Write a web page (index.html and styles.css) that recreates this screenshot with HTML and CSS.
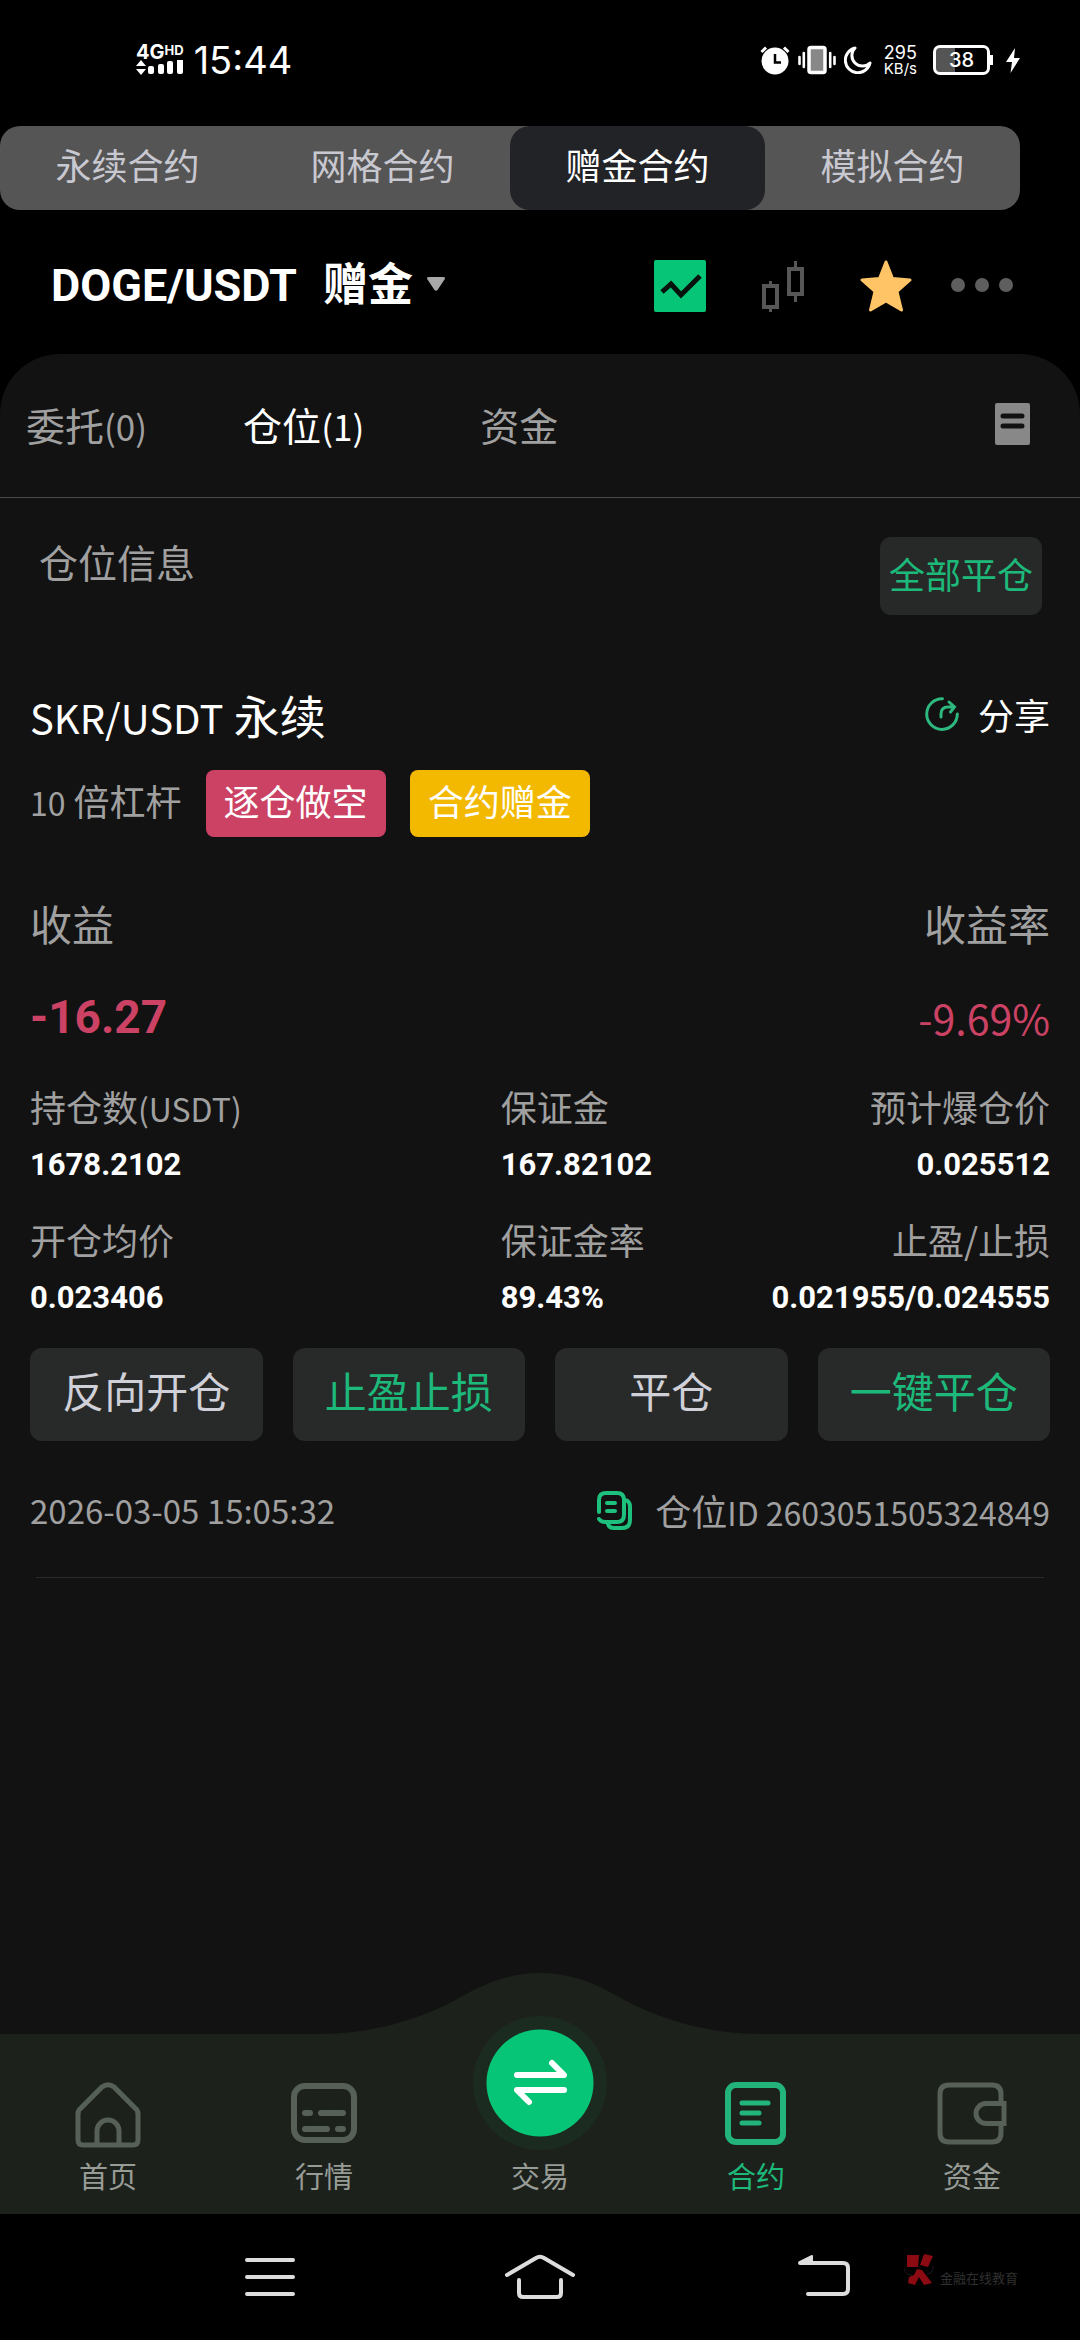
FILE: index.html
```html
<!DOCTYPE html>
<html lang="zh-CN">
<head>
<meta charset="utf-8">
<meta name="viewport" content="width=device-width, initial-scale=1">
<title>合约仓位</title>
<link rel="stylesheet" href="styles.css">
</head>
<body>
<header class="status">
  <div class="status-left">
    <div class="signal">
      <div class="signal-type">4G<span class="signal-hd">HD</span></div>
      <svg width="47" height="16" viewBox="0 0 47 16" fill="#fff"><path d="M5 0l5 6H0zM0 9h10l-5 6z"/><rect x="12" y="6" width="6" height="8" rx="2"/><rect x="22" y="4" width="6" height="10" rx="2"/><rect x="31" y="1" width="6" height="13" rx="2"/><rect x="41" y="-2" width="6" height="16" rx="2"/></svg>
    </div>
    <time class="clock">15:44</time>
  </div>
  <div class="status-right">
    <svg width="30" height="30" viewBox="0 0 30 30"><circle cx="15" cy="16" r="13.500" fill="#fff"/><path d="M1.500 7L6 2.500M28.500 7L24 2.500" stroke="#fff" stroke-width="3"/><path d="M15 9v8.500h6" fill="none" stroke="#000" stroke-width="2.500"/></svg>
    <svg width="38" height="30" viewBox="0 0 38 30"><rect x="11" y="2.500" width="16" height="25" rx="2" fill="#888" stroke="#fff" stroke-width="3.500"/><path d="M1.500 12v7M5.800 8v14M32.200 8v14M36.500 12v7" stroke="#fff" stroke-width="2.600" stroke-linecap="round"/></svg>
    <svg width="28" height="28" viewBox="0 0 28 28"><path d="M11 2A12.500 12.500 0 1 0 26 17A10.500 10.500 0 0 1 11 2z" fill="none" stroke="#fff" stroke-width="3" stroke-linejoin="round"/></svg>
    <div class="speed"><span class="speed-num">295</span><span class="speed-unit">KB/s</span></div>
    <div class="battery"><span>38</span></div>
    <svg width="14" height="25" viewBox="0 0 14 25"><path d="M9 0L0 14h6L4.500 25L14 10H8z" fill="#fff"/></svg>
  </div>
</header>

<nav class="modes">
  <button class="mode" type="button">永续合约</button>
  <button class="mode" type="button">网格合约</button>
  <button class="mode mode-on" type="button">赠金合约</button>
  <button class="mode" type="button">模拟合约</button>
</nav>

<section class="pair">
  <button class="pair-name" type="button"><span><span class="pair-code">DOGE/USDT</span>赠金</span>
    <svg width="18" height="14" viewBox="0 0 18 14"><path d="M2 0h14q3 0 1.500 2.500L10.500 13q-1.500 1.500-3 0L.5 2.500Q-1 0 2 0z" fill="#a8a8a8"/></svg>
  </button>
  <div class="pair-tools">
    <button class="icon-btn" type="button" aria-label="走势图"><svg width="52" height="52" viewBox="0 0 52 52"><rect width="52" height="52" rx="2" fill="#06c577"/><path d="M8 32l9-8 10 11 19-19" fill="none" stroke="#06120c" stroke-width="5"/></svg></button>
    <button class="icon-btn" type="button" aria-label="K线"><svg width="42" height="52" viewBox="0 0 42 52" fill="none" stroke="#575757" stroke-width="4"><rect x="2" y="26" width="13" height="21"/><rect x="27" y="9" width="13" height="25"/><path d="M8.500 21v5M8.500 47v5M33.500 1v8M33.500 34v8" stroke-width="3"/></svg></button>
    <button class="icon-btn" type="button" aria-label="收藏"><svg width="52" height="52" viewBox="0 0 52 52"><path d="M26 2L32.500 18.500 50 20 37 31.500 41.500 50 26 41 10.500 50 15 31.500 2 20 19.500 18.500z" fill="#ffc466" stroke="#ffc466" stroke-width="3" stroke-linejoin="round"/></svg></button>
    <button class="icon-btn" type="button" aria-label="更多"><svg width="62" height="52" viewBox="0 0 62 52" fill="#5e5e5e"><circle cx="7" cy="25" r="7"/><circle cx="31" cy="25" r="7"/><circle cx="55" cy="25" r="7"/></svg></button>
  </div>
</section>

<main class="sheet">
  <div class="sheet-head">
    <button class="tab" type="button">委托<span class="lat-39">(0)</span></button>
    <button class="tab tab-on" type="button">仓位<span class="lat-39">(1)</span></button>
    <button class="tab" type="button">资金</button>
    <button class="icon-btn records" type="button" aria-label="记录"><svg width="35" height="42" viewBox="0 0 35 42"><rect width="35" height="42" rx="2" fill="#888"/><path d="M8 13h19M8 23h19" stroke="#121212" stroke-width="5" stroke-linecap="round"/></svg></button>
  </div>

  <div class="section-head">
    <h2 class="section-title">仓位信息</h2>
    <button class="close-all" type="button">全部平仓</button>
  </div>

  <article class="position">
    <div class="row">
      <h3 class="symbol"><span class="lat-45">SKR/USDT</span> 永续</h3>
      <button class="share" type="button"><svg width="34" height="34" viewBox="0 0 34 34" fill="none" stroke="#2db87f" stroke-width="3" stroke-linecap="round"><path d="M17.500 1.800A15.300 15.300 0 1 0 32.300 17"/><path d="M16 20v-3q0-7 7-7h5M24 5l5.500 5-4 5"/></svg>分享</button>
    </div>
    <div class="tags">
      <span class="lever"><span class="lat-36">10</span> 倍杠杆</span>
      <span class="tag tag-short">逐仓做空</span>
      <span class="tag tag-bonus">合约赠金</span>
    </div>
    <div class="row profit-labels"><span>收益</span><span>收益率</span></div>
    <div class="row profit-values"><strong class="profit">-16.27</strong><span class="rate">-9.69%</span></div>
    <dl class="stats">
      <div class="stat"><dt>持仓数<span class="lat-36">(USDT)</span></dt><dd>1678.2102</dd></div>
      <div class="stat"><dt>保证金</dt><dd>167.82102</dd></div>
      <div class="stat stat-end"><dt>预计爆仓价</dt><dd>0.025512</dd></div>
      <div class="stat"><dt>开仓均价</dt><dd>0.023406</dd></div>
      <div class="stat"><dt>保证金率</dt><dd>89.43%</dd></div>
      <div class="stat stat-end"><dt>止盈/止损</dt><dd>0.021955/0.024555</dd></div>
    </dl>
    <div class="actions">
      <button class="action" type="button">反向开仓</button>
      <button class="action action-green" type="button">止盈止损</button>
      <button class="action" type="button">平仓</button>
      <button class="action action-green" type="button">一键平仓</button>
    </div>
    <div class="row meta">
      <time class="opened">2026-03-05 15:05:32</time>
      <div class="pos-id">
        <button class="icon-btn" type="button" aria-label="复制"><svg width="35" height="39" viewBox="0 0 35 39" fill="none" stroke="#1dc07c" stroke-width="4" stroke-linecap="round"><path d="M2 21V9q0-7 7-7h11q7 0 7 7v15q0 7-7 7H8q-4 0-6-3"/><path d="M10 12h8M10 20h8"/><path d="M28 9q5 1 5 7v13q0 8-8 8h-8q-5 0-6-4"/></svg></button>
        <span>仓位<span class="lat-36">ID 2603051505324849</span></span>
      </div>
    </div>
    <hr class="rule">
  </article>
</main>

<nav class="tabbar">
  <svg class="hump" width="440" height="62" viewBox="0 0 440 62"><path d="M0 61C50 61 100 47 141 24C165 10 190 0 220 0S275 10 299 24C340 47 390 61 440 61V62H0z" fill="#1d211c"/></svg>
  <a class="nav-item" href="#home"><svg width="66" height="66" viewBox="0 0 66 66" fill="none" stroke="#566057" stroke-width="5"><path d="M3 32Q3 28 6 26L27 5Q33 .5 39 5L60 26Q63 28 63 32V58Q63 63 58 63H8Q3 63 3 58z"/><path d="M22 63V49a11 11 0 0 1 22 0V63"/></svg>首页</a>
  <a class="nav-item" href="#market"><svg width="66" height="66" viewBox="0 0 66 66" fill="none" stroke="#566057" stroke-width="6"><rect x="3" y="4" width="60" height="54" rx="11"/><path d="M14 31h5M30 31h22M14 47h22M47 47h5" stroke-linecap="round"/></svg>行情</a>
  <a class="nav-item nav-trade" href="#trade"><svg width="134" height="134" viewBox="0 0 134 134"><circle cx="67" cy="67" r="67" fill="#1c2b1f"/><circle cx="67" cy="67" r="53.500" fill="#06c577"/><path d="M44 59h47L79 47M91 74H44l12 12" fill="none" stroke="#fff" stroke-width="6" stroke-linecap="round" stroke-linejoin="round"/></svg>交易</a>
  <a class="nav-item nav-on" href="#contract"><svg width="66" height="66" viewBox="0 0 66 66" fill="none" stroke="#22b47a" stroke-width="6"><rect x="5" y="3" width="55" height="57" rx="8"/><path d="M19 21h26M19 31h17M19 41h17" stroke-width="5" stroke-linecap="round"/></svg>合约</a>
  <a class="nav-item" href="#assets"><svg width="70" height="66" viewBox="0 0 70 66" fill="none" stroke="#566057" stroke-width="5"><path d="M64 21V12Q64 3 55 3H12Q3 3 3 12V51Q3 60 12 60H55Q64 60 64 51V42"/><path d="M67 21.500H49a10 10 0 0 0 0 20H67z"/></svg>资金</a>
</nav>

<footer class="sysbar">
  <button class="icon-btn" type="button" aria-label="最近任务"><svg width="50" height="46" viewBox="0 0 50 46" stroke="#ddd" stroke-width="4" stroke-linecap="round"><path d="M2 6h46M2 23h46M2 40h46"/></svg></button>
  <button class="icon-btn" type="button" aria-label="主屏幕"><svg width="70" height="46" viewBox="0 0 70 46" fill="none" stroke="#ddd" stroke-width="4" stroke-linecap="round"><path d="M2 21L31 4q4-2.500 8 0L68 21M14 26v13q0 4 4 4h34q4 0 4-4V26"/></svg></button>
  <button class="icon-btn sys-back" type="button" aria-label="返回"><svg width="52" height="46" viewBox="0 0 52 46" fill="none" stroke="#ddd" stroke-width="4" stroke-linecap="round"><path d="M2 9h43q5 0 5 5v21q0 5-5 5H10"/><path d="M2 8L14 2v7z" fill="#ddd" stroke-width="2" stroke-linejoin="round"/></svg></button>
  <div class="watermark"><svg width="32" height="32" viewBox="0 0 32 32"><path d="M4 1h12l-1 12H4zM21 0l9 2-5 11-8-2zM14 15l5 1 10 13-8 2-5-8-4 8-7-2 1-6 5-2z" fill="#8c0a12"/><path d="M1 15q2 6 8 6M30 12q1 7-6 8" fill="none" stroke="#1c1c22"/></svg><span>金融在线教育</span></div>
</footer>
</body>
</html>
```
FILE: styles.css
```css
* { box-sizing: border-box; }
body {
  margin: 0;
  min-height: 100vh;
  display: flex;
  flex-direction: column;
  background: #000;
  color: #fff;
  font-family: "Noto Sans CJK SC", sans-serif;
  font-size: 36px;
  line-height: 48px;
}
button {
  margin: 0;
  padding: 0;
  border: 0;
  background: none;
  color: inherit;
  font: inherit;
}
svg { display: block; flex: none; }
h2, h3, dl, dd { margin: 0; font-weight: 400; }

/* Latin runs sit slightly smaller than the Chinese text beside them */
.lat-36, .lat-39, .lat-45 { line-height: 1px; }
.lat-36 { font-size: 32px; }
.lat-39 { font-size: 35px; }
.lat-45 { font-size: 40px; }

.status {
  height: 120px;
  padding: 0 60px 0 136px;
  display: flex;
  align-items: center;
  justify-content: space-between;
  font-family: Inter, sans-serif;
}
.status-left, .status-right { display: flex; align-items: center; }
.status-left { gap: 10px; }
.status-right { gap: 8px; }
.signal-type {
  display: flex;
  font: 700 20px/16px Inter, sans-serif;
}
.signal-hd { font-size: 13px; line-height: 12px; }
.clock { font-size: 38px; }
.speed {
  display: flex;
  flex-direction: column;
  align-items: center;
  margin: 0 8px 0 4px;
}
.speed-num { font-size: 18px; line-height: 17px; }
.speed-unit { font-size: 15px; line-height: 15px; }
.battery {
  position: relative;
  width: 57px;
  height: 30px;
  margin-right: 8px;
  border: 3px solid #fff;
  border-radius: 7px;
  background: linear-gradient(90deg, #555 38%, #000 38%);
  font-size: 20px;
  line-height: 24px;
  font-weight: 500;
  text-align: center;
}
.battery::after {
  content: "";
  position: absolute;
  right: -6px;
  top: 7px;
  width: 3px;
  height: 10px;
  background: #fff;
}

.modes {
  display: flex;
  height: 84px;
  margin: 6px 60px 0 0;
  border-radius: 20px;
  background: #555;
}
.mode {
  flex: 1;
  padding-bottom: 8px;
  border-radius: 20px;
  color: #c8c8d0;
}
.mode-on { background: #222327; color: #fff; }

.pair {
  display: flex;
  justify-content: space-between;
  align-items: center;
  height: 144px;
  padding: 8px 67px 0 51px;
}
.pair-name {
  display: flex;
  align-items: center;
  gap: 14px;
  padding-bottom: 4px;
  font-size: 45px;
  font-weight: 700;
}
.pair-code { margin-right: 26px; font-family: Roboto, sans-serif; }
.pair-tools { display: flex; align-items: center; gap: 56px; }
.pair-tools .icon-btn:last-child { margin-left: -17px; }

.sheet {
  flex: 1;
  border-radius: 60px 60px 0 0;
  background: #121212;
}
.sheet-head {
  display: flex;
  align-items: center;
  height: 144px;
  padding: 0 50px 3px 26px;
  border-bottom: 1px solid #4a4a4a;
}
.tab { margin-right: 96px; color: #a0a0a0; font-size: 39px; }
.tab-on { margin-right: 116px; color: #fff; }
.records { margin-left: auto; }

.section-head {
  display: flex;
  justify-content: space-between;
  align-items: flex-start;
  padding: 39px 38px 0 39px;
}
.section-title { color: #a0a0a0; font-size: 39px; }
.close-all {
  height: 78px;
  padding: 0 9px 7px;
  border-radius: 11px;
  background: #272928;
  color: #1db97b;
}

.position { padding: 75px 30px 0; }
.row { display: flex; justify-content: space-between; align-items: center; }
.symbol { font-size: 46px; }
.share { display: flex; align-items: center; gap: 19px; }
.tags { display: flex; align-items: center; gap: 24px; margin-top: 32px; color: #a0a0a0; }
.lever { padding-bottom: 7px; }
.tag {
  padding: 6px 18px 13px;
  border-radius: 8px;
  color: #fff;
}
.tag-short { background: #cb4264; }
.tag-bonus { background: #f3b900; }

.profit-labels { margin-top: 56px; color: #a0a0a0; font-size: 42px; line-height: 60px; }
.profit-values { margin-top: 34px; color: #cb4264; line-height: 60px; }
.profit { font-family: Roboto, sans-serif; font-size: 46px; }
.rate { font-size: 41px; }

.stats {
  display: grid;
  grid-template-columns: 6fr 3fr 4fr;
  row-gap: 28px;
  margin-top: 35px;
}
.stat dt { color: #a0a0a0; white-space: nowrap; }
.stat dd {
  margin-top: 13px;
  font: 700 31px/44px Roboto, sans-serif;
}
.stat-end { text-align: right; }

.actions {
  display: grid;
  grid-template-columns: repeat(4, 1fr);
  gap: 30px;
  margin-top: 28px;
}
.action {
  height: 93px;
  padding-bottom: 9px;
  border-radius: 12px;
  background: #282a29;
  color: #d0d0d8;
  font-size: 42px;
}
.action-green { color: #1db97b; }

.meta { margin-top: 45px; color: #a0a0a0; }
.opened { font-size: 33px; }
.pos-id { display: flex; align-items: center; gap: 23px; }
.rule {
  height: 1px;
  margin: 43px 6px 0;
  border: 0;
  background: #2a2a2a;
}

.tabbar {
  position: relative;
  display: grid;
  grid-template-columns: repeat(5, 1fr);
  background: #1d211c;
}
.hump {
  position: absolute;
  left: 50%;
  bottom: 100%;
  transform: translate(-50%, 1px);
}
.nav-item {
  position: relative;
  display: flex;
  flex-direction: column;
  align-items: center;
  gap: 9px;
  padding: 48px 0 21px;
  color: #979c96;
  font-size: 29px;
  line-height: 36px;
  text-decoration: none;
}
.nav-on { color: #1db97b; }
.nav-trade { justify-content: flex-end; }
.nav-trade svg { position: absolute; bottom: 64px; }

.sysbar {
  position: relative;
  display: grid;
  grid-template-columns: repeat(3, 1fr);
  align-items: center;
  justify-items: center;
  height: 126px;
  padding: 0 135px;
}
.sys-back { margin-left: 28px; }
.watermark {
  position: absolute;
  right: 62px;
  top: 40px;
  display: flex;
  align-items: flex-end;
  gap: 5px;
  color: #303030;
  font-size: 13px;
  line-height: 16px;
}
```
